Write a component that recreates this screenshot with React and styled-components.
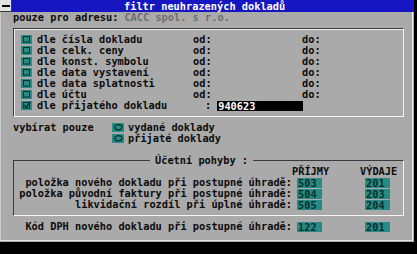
import React from "react";
import styled, { createGlobalStyle } from "styled-components";

const GRAY = "#aaaaaa";
const TEAL = "#278b85";
const DARK = "#0a2e2c";

const GlobalStyle = createGlobalStyle`
  html, body { margin: 0; padding: 0; background: #000; }
  body {
    font-family: "DejaVu Sans Mono", "Liberation Mono", monospace;
    font-weight: bold;
    font-size: 10.3px;
    letter-spacing: 0;
  }
`;

const Window = styled.div`
  width: 414px;
  height: 242px;
  background: ${GRAY};
  display: flex;
  flex-direction: column;
  color: #0c0c0c;
`;

const TitleBar = styled.div`
  height: 12px;
  background: #1515c2;
  display: flex;
  align-items: flex-start;
`;

const SysBox = styled.div`
  width: 11px;
  height: 11px;
  background: #e2e2e2;
  border-right: 1px solid #3a3a3a;
  border-bottom: 1px solid #3a3a3a;
  display: flex;
  align-items: center;
  justify-content: center;
  &::before {
    content: "";
    width: 8px;
    height: 2px;
    background: #000;
  }
`;

const Title = styled.div`
  margin-left: 112px;
  color: #fff;
  line-height: 12px;
  white-space: pre;
`;

const Body = styled.div`
  box-sizing: border-box;
  width: 413px;
  height: 229px;
  border-left: 1px solid #cdcdcd;
  border-right: 1px solid #f2f2f2;
  border-bottom: 1px solid #e6e6e6;
  padding: 0 8px 0 12px;
  display: flex;
  flex-direction: column;
`;

const Line = styled.div`
  height: 11px;
  line-height: 11px;
  white-space: pre;
  display: flex;
  align-items: center;
`;

const Muted = styled.span`
  color: #6e6e6e;
  margin-left: 6px;
`;

const Group = styled.div`
  margin-top: 5px;
  border-top: 1px solid #3a3a3a;
  border-left: 1px solid #3a3a3a;
  border-right: 1px solid #f4f4f4;
  border-bottom: 1px solid #f4f4f4;
  box-shadow: inset 1px 1px 0 #eeeeee;
  padding: 5px 0 5px 7px;
`;

const FilterRow = styled.div`
  display: grid;
  grid-template-columns: 16px 156px 109px 1fr;
  height: 11px;
  line-height: 11px;
  align-items: center;
  white-space: pre;
`;

const Tile = styled.svg`
  display: block;
`;

const InputCell = styled.div`
  grid-column: 3 / 5;
  display: flex;
  align-items: center;
`;

const Colon = styled.span`
  padding-left: 12px;
`;

const Input = styled.div`
  margin-left: 6px;
  width: 85px;
  height: 10px;
  line-height: 10px;
  background: #000;
  color: #fff;
  padding-left: 1px;
`;

const ChoiceBlock = styled.div`
  margin-top: 5px;
  display: grid;
  grid-template-columns: 99px 16px 1fr;
  grid-auto-rows: 11px;
  line-height: 11px;
  align-items: center;
  white-space: pre;
`;

const Fieldset = styled.fieldset`
  margin: 11px 0 0 0;
  padding: 0 0 5px 0;
  min-inline-size: 0;
  border-top: 1px solid #3a3a3a;
  border-left: 1px solid #3a3a3a;
  border-right: 1px solid #f4f4f4;
  border-bottom: 1px solid #f4f4f4;
`;

const Legend = styled.legend`
  margin-left: 136px;
  padding: 0 5px;
  height: 11px;
  line-height: 11px;
  white-space: pre;
`;

const HeadRow = styled.div`
  display: grid;
  grid-template-columns: ${(p) => p.$lead}px 68px 1fr;
  height: 11px;
  line-height: 11px;
`;

const ValueRow = styled.div`
  display: grid;
  grid-template-columns: ${(p) => p.$lead}px 68px 1fr;
  height: 11px;
  line-height: 11px;
  align-items: center;
  margin-top: ${(p) => p.$top || 0}px;
`;

const Label = styled.div`
  text-align: right;
  padding-right: 5px;
  white-space: pre;
`;

const Value = styled.div`
  width: 24px;
  height: 10px;
  line-height: 10px;
  padding-left: 1px;
  background: ${TEAL};
  color: ${DARK};
`;

const Check = ({ checked }) => (
  <Tile width="11" height="9" viewBox="0 0 11 9">
    <rect width="11" height="9" fill={TEAL} />
    <rect x="2.5" y="1.5" width="6" height="5.5" fill="none" stroke={DARK} />
    {checked && (
      <path d="M3.5 4 L5.2 6.3 L9.3 0.8" fill="none" stroke={DARK} strokeWidth="1.4" />
    )}
  </Tile>
);

const Radio = () => (
  <Tile width="12" height="9" viewBox="0 0 12 9">
    <rect width="12" height="9" fill={TEAL} />
    <ellipse cx="6.3" cy="4.3" rx="3.6" ry="2.6" fill="none" stroke={DARK} strokeWidth="1.3" />
  </Tile>
);

const filters = [
  "dle čísla dokladu",
  "dle celk. ceny",
  "dle konst. symbolu",
  "dle data vystavení",
  "dle data splatnosti",
  "dle účtu",
];

const rows = [
  ["položka nového dokladu při postupné úhradě:", "503", "201"],
  ["položka původní faktury při postupné úhradě:", "504", "203"],
  ["likvidační rozdíl při úplné úhradě:", "505", "204"],
];

export default function App() {
  return (
    <>
      <GlobalStyle />
      <Window>
        <TitleBar>
          <SysBox />
          <Title>filtr neuhrazených dokladů</Title>
        </TitleBar>
        <Body>
          <Line>
            pouze pro adresu:<Muted>CACC spol. s r.o.</Muted>
          </Line>
          <Group>
            {filters.map((f) => (
              <FilterRow key={f}>
                <Check />
                <span>{f}</span>
                <span>od:</span>
                <span>do:</span>
              </FilterRow>
            ))}
            <FilterRow>
              <Check checked />
              <span>dle přijatého dokladu</span>
              <InputCell>
                <Colon>:</Colon>
                <Input>940623</Input>
              </InputCell>
            </FilterRow>
          </Group>
          <ChoiceBlock>
            <span>vybírat pouze</span>
            <Radio />
            <span>vydané doklady</span>
            <span />
            <Radio />
            <span>přijaté doklady</span>
          </ChoiceBlock>
          <Fieldset>
            <Legend>Účetní pohyby :</Legend>
            <HeadRow $lead={278}>
              <span />
              <span>PŘÍJMY</span>
              <span>VÝDAJE</span>
            </HeadRow>
            {rows.map(([l, a, b]) => (
              <ValueRow key={l} $lead={283}>
                <Label>{l}</Label>
                <Value>{a}</Value>
                <Value>{b}</Value>
              </ValueRow>
            ))}
          </Fieldset>
          <ValueRow $lead={284} $top={5}>
            <Label>Kód DPH nového dokladu při postupné úhradě:</Label>
            <Value>122</Value>
            <Value>201</Value>
          </ValueRow>
        </Body>
      </Window>
    </>
  );
}
